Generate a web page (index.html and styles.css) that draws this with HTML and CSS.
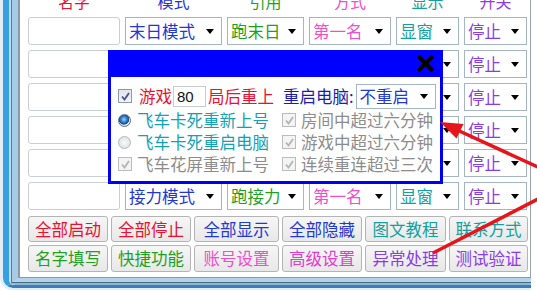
FILE: index.html
```html
<!DOCTYPE html>
<html lang="zh-CN">
<head>
<meta charset="utf-8">
<link rel="stylesheet" href="styles.css">
</head>
<body>
<div class="win">
  <div class="f0"><div class="f1"><div class="f2"><div class="f3"><div class="f4"><div class="f5">
    <div class="content">
      <div class="grid hdr">
        <span class="red">名字</span>
        <span class="blue">模式</span>
        <span class="green">引用</span>
        <span class="pink">方式</span>
        <span class="teal">显示</span>
        <span class="purple">开关</span>
      </div>
      <div class="grid rows">
        <div class="inp"></div><div class="sel blue">末日模式</div><div class="sel green">跑末日</div><div class="sel pink">第一名</div><div class="sel teal">显窗</div><div class="sel purple">停止</div>
        <div class="inp"></div><div class="sel blue">末日模式</div><div class="sel green">跑末日</div><div class="sel pink">第一名</div><div class="sel teal">显窗</div><div class="sel purple">停止</div>
        <div class="inp"></div><div class="sel blue">末日模式</div><div class="sel green">跑末日</div><div class="sel pink">第一名</div><div class="sel teal">显窗</div><div class="sel purple">停止</div>
        <div class="inp"></div><div class="sel blue">末日模式</div><div class="sel green">跑末日</div><div class="sel pink">第一名</div><div class="sel teal">显窗</div><div class="sel purple">停止</div>
        <div class="inp"></div><div class="sel blue">末日模式</div><div class="sel green">跑末日</div><div class="sel pink">第一名</div><div class="sel teal">显窗</div><div class="sel purple">停止</div>
        <div class="inp"></div><div class="sel blue">接力模式</div><div class="sel green">跑接力</div><div class="sel pink">第一名</div><div class="sel teal">显窗</div><div class="sel purple">停止</div>
      </div>
      <div class="btns">
        <div class="btn red">全部启动</div>
        <div class="btn red">全部停止</div>
        <div class="btn blue">全部显示</div>
        <div class="btn blue">全部隐藏</div>
        <div class="btn teal">图文教程</div>
        <div class="btn teal">联系方式</div>
        <div class="btn green">名字填写</div>
        <div class="btn green">快捷功能</div>
        <div class="btn pink">账号设置</div>
        <div class="btn pink2">高级设置</div>
        <div class="btn purple">异常处理</div>
        <div class="btn purple">测试验证</div>
      </div>
    </div>
  </div></div></div></div></div></div>

  <div class="panel">
    <div class="ptitle">
      <svg class="close" width="17" height="17" viewBox="0 0 17 17"><path d="M2.5 2.5L14.5 14.5M14.5 2.5L2.5 14.5" stroke="#000" stroke-width="4" stroke-linecap="square"/></svg>
    </div>
    <div class="pbody">
      <div class="rowa">
        <span class="cb on"><svg width="11" height="11" viewBox="0 0 11 11"><path d="M2 5.5L4.5 8.5L9 2" fill="none" stroke="#4b4f8c" stroke-width="1.8"/></svg></span>
        <span class="red t1">游戏</span>
        <span class="num">80</span>
        <span class="red">局后重上</span>
        <span class="dblue t2">重启电脑:</span>
        <span class="sel psel blue">不重启</span>
      </div>
      <div class="opts">
        <div class="opt"><span class="rd on"></span><span class="teal2">飞车卡死重新上号</span></div>
        <div class="opt"><span class="cb dis"><svg width="11" height="11" viewBox="0 0 11 11"><path d="M2 5.5L4.5 8.5L9 2" fill="none" stroke="#b4b4b4" stroke-width="1.8"/></svg></span><span class="gray">房间中超过六分钟</span></div>
        <div class="opt"><span class="rd"></span><span class="teal2">飞车卡死重启电脑</span></div>
        <div class="opt"><span class="cb dis"><svg width="11" height="11" viewBox="0 0 11 11"><path d="M2 5.5L4.5 8.5L9 2" fill="none" stroke="#b4b4b4" stroke-width="1.8"/></svg></span><span class="gray">游戏中超过六分钟</span></div>
        <div class="opt"><span class="cb dis"><svg width="11" height="11" viewBox="0 0 11 11"><path d="M2 5.5L4.5 8.5L9 2" fill="none" stroke="#b4b4b4" stroke-width="1.8"/></svg></span><span class="gray">飞车花屏重新上号</span></div>
        <div class="opt"><span class="cb dis"><svg width="11" height="11" viewBox="0 0 11 11"><path d="M2 5.5L4.5 8.5L9 2" fill="none" stroke="#b4b4b4" stroke-width="1.8"/></svg></span><span class="gray">连续重连超过三次</span></div>
      </div>
    </div>
  </div>
</div>

<svg class="arrows" width="537" height="291" viewBox="0 0 537 291">
  <line x1="540" y1="168" x2="455" y2="129" stroke="#e8141c" stroke-width="3.5"/>
  <polygon points="440,122 463.5,124 456.5,138.5" fill="#e8141c"/>
  <line x1="540" y1="198" x2="433" y2="253" stroke="#e8141c" stroke-width="3.5"/>
</svg>
</body>
</html>
```

FILE: styles.css
```css
* { box-sizing: border-box; }

body {
  margin: 0;
  width: 537px;
  height: 291px;
  overflow: hidden;
  background: #fff;
  font-family: "Noto Sans CJK SC", "Noto Sans", sans-serif;
  font-size: 16.5px;
  position: relative;
}

.win { position: relative; width: 531px; }

.f0 { border-left: 3px solid #e4edf5; border-bottom: 2px solid #e4edf5; border-bottom-left-radius: 12px; }
.f1 { border-left: 6px solid #36a0e0; border-bottom: 3px solid #3a7fb8; border-bottom-left-radius: 10px; }
.f2 { border-left: 2px solid #bcdcf0; border-bottom: 2px solid #8fb6d4; border-bottom-left-radius: 6px; }
.f3 { border-left: 1px solid #5b7a94; border-bottom: 1px solid #4d6a84; }
.f4 { border-left: 6px solid #a6cbe4; border-bottom: 4px solid #b2d4ea; }
.f5 { border-left: 2px solid #8c98a4; border-bottom: 1px solid #8c98a4; }

.content {
  background: #fff;
  height: 277px;
  border-right: 1px solid #9aa4ae;
  padding-left: 8px;
}

.grid {
  display: grid;
  grid-template-columns: 92px 97px 77px 82px 63px 63px;
  column-gap: 5px;
}

.hdr { height: 17px; }
.hdr span {
  text-align: center;
  line-height: 16px;
  font-size: 16px;
  margin-top: -7px;
}

.rows { grid-auto-rows: 28px; row-gap: 5px; }

.inp {
  border: 1px solid #cbcfd4;
  border-radius: 3px;
  background: #fff;
}

.sel {
  border: 1px solid #a4b6c6;
  background: #fff;
  display: flex;
  align-items: center;
  justify-content: space-between;
  padding: 0 7px 0 3px;
  line-height: 1;
  white-space: nowrap;
}
.sel::after {
  content: "";
  border-left: 4.5px solid transparent;
  border-right: 4.5px solid transparent;
  border-top: 5px solid #000;
}

.btns {
  display: grid;
  grid-template-columns: 80px 80px 85px 80px 81px 79px;
  grid-template-rows: 26px 27px;
  gap: 3px;
  margin-top: 6px;
}
.btn {
  border: 1px solid #b4b4b4;
  border-radius: 3px;
  background: linear-gradient(#f6f6f6, #e8e8e8);
  display: flex;
  align-items: center;
  justify-content: center;
  line-height: 1;
  white-space: nowrap;
}

.red { color: #ea1030; }
.blue { color: #2238d2; }
.dblue { color: #1c1caa; }
.green { color: #1ea21e; }
.pink { color: #f04ecc; }
.pink2 { color: #e23cd0; }
.teal { color: #14a0a0; }
.teal2 { color: #12a2b4; }
.purple { color: #8a3ce6; }
.gray { color: #8c8c8c; }

/* panel */
.panel {
  position: absolute;
  left: 108px;
  top: 50px;
  width: 335px;
}
.ptitle {
  height: 27px;
  background: #0000ff;
  display: flex;
  justify-content: flex-end;
  align-items: center;
  padding-right: 9px;
}
.close { display: block; }
.pbody {
  background: #fff;
  border: 3px solid #0000f0;
  border-top: 0;
  height: 107px;
  padding: 6px 0 0 7px;
}
.rowa {
  display: flex;
  align-items: center;
  height: 26px;
  white-space: nowrap;
  line-height: 1;
}
.t1 { margin-left: 7px; }
.num {
  width: 33px;
  height: 21px;
  border: 1px solid #c6ccd2;
  margin: 0 2px 0 1px;
  font-family: "Liberation Sans", sans-serif;
  font-size: 15px;
  color: #111;
  padding-left: 3px;
  display: flex;
  align-items: center;
}
.t2 { margin-left: 9px; }
.psel {
  width: 80px;
  height: 25px;
  margin-left: 2px;
}

.opts {
  display: grid;
  grid-template-columns: 164px auto;
  grid-auto-rows: 22px;
}
.opt {
  display: flex;
  align-items: center;
  white-space: nowrap;
  line-height: 1;
}

.cb {
  width: 14px;
  height: 14px;
  border: 1px solid #8e9aa8;
  background: linear-gradient(#dfe3ea, #f3f4f7);
  display: flex;
  align-items: center;
  justify-content: center;
  flex: none;
}
.opt .cb { margin-right: 5px; }
.cb.dis { border-color: #bcbcbc; background: #f4f4f4; }

.rd {
  width: 13px;
  height: 13px;
  border-radius: 50%;
  border: 1px solid #b0b8c0;
  background: radial-gradient(circle at 50% 50%, #f8f8f8 0, #dcdcdc 100%);
  margin-right: 6px;
  flex: none;
}
.rd.on {
  border-color: #5c6c7c;
  background: radial-gradient(circle at 45% 40%, #9fd4f8 0, #2a7ac8 35%, #1a4a8a 55%, #e8eef4 62%, #c8d0d8 100%);
}

.arrows {
  position: absolute;
  left: 0;
  top: 0;
  pointer-events: none;
}
```
